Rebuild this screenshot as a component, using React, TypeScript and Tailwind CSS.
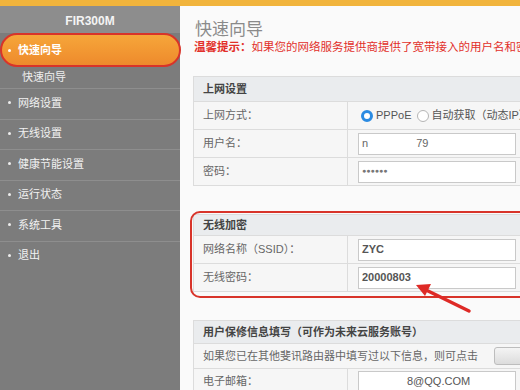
import React from "react";

const CJK = '"Liberation Sans", "Noto Sans CJK SC", sans-serif';

function NavItem({ label }: { label: string }) {
  return (
    <div className="h-[30.5px] shrink-0 border-t border-[#8e8e8e] flex items-center pb-[2px] pl-[8px] text-[11px] text-[#f2f2f2]">
      <span className="w-[3px] h-[3px] rounded-full bg-[#eeeeee] mr-[7px]" />
      {label}
    </div>
  );
}

function Label({ children }: { children: React.ReactNode }) {
  return (
    <div className="w-[154px] shrink-0 border-r border-[#dcdcdc] flex items-center pl-[9px] text-[11px] text-[#666]">
      {children}
    </div>
  );
}

function Input({ children, className = "" }: { children?: React.ReactNode; className?: string }) {
  return (
    <div className={"w-[158px] h-[22px] bg-white border border-[#c9c9c9] flex items-center pl-[3px] text-[11px] " + className}>
      {children}
    </div>
  );
}

function Row({ label, children, h = "h-[28px]" }: { label: string; children: React.ReactNode; h?: string }) {
  return (
    <div className={"flex border-t border-[#dcdcdc] bg-[#f6f6f6] " + h}>
      <Label>{label}</Label>
      <div className="flex items-center pl-[10px]">{children}</div>
    </div>
  );
}

export default function App() {
  return (
    <div className="w-[520px] h-[390px] overflow-hidden relative bg-[#fafafa] flex flex-col" style={{ fontFamily: CJK }}>
      {/* top orange bar */}
      <div className="h-[6px] shrink-0 bg-[#f1b43c]" />
      <div className="flex h-[384px] shrink-0">
        {/* sidebar */}
        <aside className="w-[180px] shrink-0 bg-[#7c7c7c] flex flex-col">
          <div className="h-[27px] shrink-0 bg-[#8d8d8d] flex items-center justify-center pt-[2px] text-[12px] font-semibold text-[#f4f4f4]">
            FIR300M
          </div>
          <div className="h-[34px] shrink-0">
            <div className="h-[34px] w-[181px] rounded-[17px] border-[2.5px] border-[#d8342a] bg-gradient-to-b from-[#f6a63a] to-[#ee8a2c] flex items-center pl-[6px] text-[11px] font-semibold text-white">
              <span className="w-[3px] h-[3px] rounded-full bg-white mr-[7px]" />
              快速向导
            </div>
          </div>
          <div className="h-[21px] shrink-0 flex items-center pl-[22px] text-[11px] text-[#eeeeee]">快速向导</div>
          <NavItem label="网络设置" />
          <NavItem label="无线设置" />
          <NavItem label="健康节能设置" />
          <NavItem label="运行状态" />
          <NavItem label="系统工具" />
          <NavItem label="退出" />
        </aside>
        <div className="w-[2px] bg-white" />
        <div className="w-[1px] bg-[#e2e2e2]" />
        {/* main */}
        <main className="flex-1 pl-[13px] relative">
          <div className="pt-[13px] pl-[2px] text-[17px] leading-[22px] text-[#8a8a8a]">快速向导</div>
          <div className="mt-[-1px] pl-[1px] leading-[14px] text-[11.5px] text-[#e2302a] whitespace-nowrap">
            <span className="font-bold">温馨提示：</span>如果您的网络服务提供商提供了宽带接入的用户名和密码，请在此处填写
          </div>

          {/* table 1 */}
          <div className="mt-[22px] w-[340px] border border-[#dcdcdc]">
            <div className="h-[24px] bg-[#eaecee] flex items-center pl-[9px] text-[11px] font-semibold text-[#444]">上网设置</div>
            <Row label="上网方式：">
              <div className="flex items-center text-[11px] text-[#555] whitespace-nowrap">
                <span className="w-[12px] h-[12px] rounded-full border-[3px] border-[#2b8be2] bg-white ml-[3px] mr-[3px]" />
                PPPoE
                <span className="w-[12px] h-[12px] rounded-full border border-[#b5b5b5] bg-white ml-[6px] mr-[2px]" />
                自动获取（动态IP）
              </div>
            </Row>
            <Row label="用户名：">
              <Input className="text-[#666]">
                <span>n</span>
                <span className="ml-[48px]">79</span>
              </Input>
            </Row>
            <Row label="密码：">
              <Input className="text-[#777]">
                <span className="text-[7px]">●●●●●●</span>
              </Input>
            </Row>
          </div>

          {/* table 2 - wireless */}
          <div className="mt-[28px] relative w-[340px]">
            <div className="border border-[#dcdcdc]">
              <div className="h-[20px] bg-[#eaecee] flex items-center pl-[9px] text-[11px] font-semibold text-[#444]">无线加密</div>
              <Row label="网络名称（SSID）：">
                <Input className="font-bold text-[#555]">ZYC</Input>
              </Row>
              <Row label="无线密码：">
                <Input className="font-bold text-[#555]">20000803</Input>
              </Row>
            </div>
            <div className="absolute left-[-3px] top-[-3px] right-[-20px] bottom-[-6px] rounded-[10px] border-[2.5px] border-[#d8342a] pointer-events-none" />
          </div>

          {/* table 3 */}
          <div className="mt-[28px] w-[340px] border border-[#dcdcdc]">
            <div className="h-[22px] bg-[#eaecee] flex items-center pl-[9px] text-[11px] font-semibold text-[#444] whitespace-nowrap">
              用户保修信息填写（可作为未来云服务账号）
            </div>
            <div className="h-[25px] flex items-center border-t border-[#dcdcdc] bg-[#f6f6f6] pl-[9px] text-[11px] text-[#666] whitespace-nowrap">
              如果您已在其他斐讯路由器中填写过以下信息，则可点击
              <span className="ml-[16px] w-[40px] h-[18px] rounded-[3px] border border-[#bdbdbd] bg-gradient-to-b from-[#f4f4f4] to-[#dcdcdc]" />
            </div>
            <Row label="电子邮箱：" h="h-[26px]">
              <Input className="text-[#555]">
                <span className="ml-[45px]">8@QQ.COM</span>
              </Input>
            </Row>
          </div>
        </main>
      </div>
      {/* red arrow */}
      <svg className="absolute left-0 top-0 pointer-events-none" width="520" height="390">
        <line x1="469" y1="311" x2="424" y2="289" stroke="#de2a26" strokeWidth="3.5" strokeLinecap="round" />
        <polygon points="416,285 431,284 425,296" fill="#de2a26" />
      </svg>
    </div>
  );
}
